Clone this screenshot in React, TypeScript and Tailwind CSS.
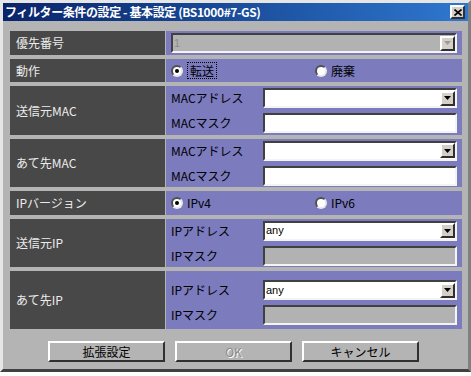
import React from "react";

const font = "font-['Noto_Sans_CJK_JP','Noto_Sans_CJK_SC',sans-serif]";

const sunken =
  "border-2 border-t-[#404040] border-l-[#404040] border-b-[#f4f4f4] border-r-[#f4f4f4]";
const raised =
  "border-2 border-t-[#ffffff] border-l-[#ffffff] border-b-[#303030] border-r-[#303030]";

const DropButton: React.FC<{ disabled?: boolean }> = ({ disabled }) => (
  <div
    className={`w-[15px] h-[15px] bg-[#d4d0c8] flex items-center justify-center ${raised}`}
  >
    <svg width="7" height="4" viewBox="0 0 7 4">
      <path d="M0 0h7L3.5 4z" fill={disabled ? "#9a9a9a" : "#000"} />
    </svg>
  </div>
);

interface FieldProps {
  value?: string;
  disabled?: boolean;
  dropdown?: boolean;
  className?: string;
}

const Field: React.FC<FieldProps> = ({ value, disabled, dropdown, className }) => (
  <div
    className={`flex items-center h-[20px] ${sunken} ${
      disabled ? "bg-[#b2b2b2]" : "bg-white"
    } ${className ?? ""}`}
  >
    <span
      className={`flex-1 pl-[1px] text-[11px] leading-none font-['Liberation_Sans',sans-serif] ${
        disabled ? "text-[#8c8c8c]" : "text-black"
      }`}
    >
      {value}
    </span>
    {dropdown && <DropButton disabled={disabled} />}
  </div>
);

const Radio: React.FC<{ checked?: boolean }> = ({ checked }) => (
  <div className="w-[12px] h-[12px] rounded-full bg-white border-2 border-t-[#505050] border-l-[#505050] border-b-[#e8e8e8] border-r-[#e8e8e8] flex items-center justify-center">
    {checked && <div className="w-[4px] h-[4px] rounded-full bg-black" />}
  </div>
);

const Row: React.FC<{ label: string; h: string; children: React.ReactNode }> = ({
  label,
  h,
  children,
}) => (
  <div className={`flex gap-px ${h}`}>
    <div className="w-[155px] shrink-0 bg-[#484848] flex items-center pl-[6px] text-[12px] text-[#ececec]">
      {label}
    </div>
    <div className="flex-1 bg-[#7b7bbd] pl-[5px] pr-[5px] text-[12px] text-black">
      {children}
    </div>
  </div>
);

const SubRow: React.FC<{ label: string; children: React.ReactNode }> = ({
  label,
  children,
}) => (
  <div className="flex items-center">
    <div className="w-[92px] shrink-0">{label}</div>
    <div className="flex-1">{children}</div>
  </div>
);

const Btn: React.FC<{ label: string; disabled?: boolean }> = ({ label, disabled }) => (
  <div
    className={`w-[117px] h-[21px] bg-[#b4b4b4] flex items-center justify-center text-[12px] ${raised} ${
      disabled ? "text-[#8c8c8c] [text-shadow:1px_1px_0_#ffffff]" : "text-black"
    }`}
  >
    {label}
  </div>
);

export default function App() {
  return (
    <div className={`w-[471px] h-[376px] bg-white ${font}`}>
      <div className="w-[471px] h-[372px] bg-[#b4b4b4] border-[3px] border-t-[#e6e6e6] border-l-[#e6e6e6] border-b-[#404040] border-r-[#808080] flex flex-col">
        <div className="h-[18px] bg-gradient-to-r from-[#0a246a] to-[#2f78cf] flex items-center justify-between pl-[2px] pr-[3px]">
          <span className="text-[12px] font-bold text-white leading-none tracking-[-0.4px]">
            フィルター条件の設定 - 基本設定 (BS1000#7-GS)
          </span>
          <div
            className={`w-[15px] h-[14px] bg-[#d4d0c8] flex items-center justify-center ${raised}`}
          >
            <svg width="8" height="7" viewBox="0 0 8 7">
              <path d="M0.5 0.5L7.5 6.5M7.5 0.5L0.5 6.5" stroke="#000" strokeWidth="1.6" />
            </svg>
          </div>
        </div>

        <div className="flex flex-col gap-[4px] pl-[7px] pr-[6px] pt-[10px]">
          <Row label="優先番号" h="h-[24px]">
            <div className="h-full flex items-center">
              <Field value="1" disabled dropdown className="w-full" />
            </div>
          </Row>

          <Row label="動作" h="h-[23px]">
            <div className="h-full flex items-center">
              <div className="w-[144px] flex items-center gap-[4px]">
                <Radio checked />
                <span className="border border-dotted border-black px-[2px] leading-[15px]">
                  転送
                </span>
              </div>
              <div className="flex items-center gap-[4px]">
                <Radio />
                <span>廃棄</span>
              </div>
            </div>
          </Row>

          <Row label="送信元MAC" h="h-[49px]">
            <div className="h-full flex flex-col justify-center gap-[5px]">
              <SubRow label="MACアドレス">
                <Field dropdown />
              </SubRow>
              <SubRow label="MACマスク">
                <Field />
              </SubRow>
            </div>
          </Row>

          <Row label="あて先MAC" h="h-[48px]">
            <div className="h-full flex flex-col justify-center gap-[5px]">
              <SubRow label="MACアドレス">
                <Field dropdown />
              </SubRow>
              <SubRow label="MACマスク">
                <Field />
              </SubRow>
            </div>
          </Row>

          <Row label="IPバージョン" h="h-[24px]">
            <div className="h-full flex items-center">
              <div className="w-[144px] flex items-center gap-[4px]">
                <Radio checked />
                <span>IPv4</span>
              </div>
              <div className="flex items-center gap-[4px]">
                <Radio />
                <span>IPv6</span>
              </div>
            </div>
          </Row>

          <Row label="送信元IP" h="h-[48px]">
            <div className="h-full flex flex-col justify-center gap-[5px]">
              <SubRow label="IPアドレス">
                <Field value="any" dropdown />
              </SubRow>
              <SubRow label="IPマスク">
                <Field disabled />
              </SubRow>
            </div>
          </Row>

          <Row label="あて先IP" h="h-[58px]">
            <div className="h-full flex flex-col justify-end gap-[5px] pb-[4px]">
              <SubRow label="IPアドレス">
                <Field value="any" dropdown />
              </SubRow>
              <SubRow label="IPマスク">
                <Field disabled />
              </SubRow>
            </div>
          </Row>
        </div>

        <div className="flex justify-center gap-[10px] mt-[12px] pr-[4px]">
          <Btn label="拡張設定" />
          <Btn label="OK" disabled />
          <Btn label="キャンセル" />
        </div>
      </div>
    </div>
  );
}
